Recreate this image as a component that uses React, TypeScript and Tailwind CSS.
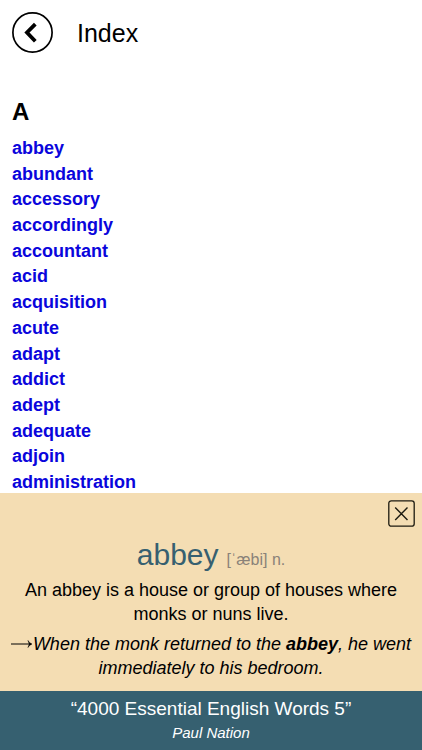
import React from "react";

const words = [
  "abbey",
  "abundant",
  "accessory",
  "accordingly",
  "accountant",
  "acid",
  "acquisition",
  "acute",
  "adapt",
  "addict",
  "adept",
  "adequate",
  "adjoin",
  "administration",
];

export default function App() {
  return (
    <div className="flex min-h-screen flex-col bg-white font-['Liberation_Sans',Arial,sans-serif] text-black">
      {/* Header */}
      <header className="flex items-center gap-6 px-3 pt-3">
        <button type="button" aria-label="Back" className="size-[41px] shrink-0">
          <svg viewBox="0 0 41 41" fill="none" stroke="currentColor" className="size-full">
            <circle cx="20.5" cy="20.5" r="19.6" strokeWidth="1.7" />
            <path d="M23.3 12.2 L15 20.5 L23.3 29.2" strokeWidth="3.8" />
          </svg>
        </button>
        <h1 className="text-[25px] leading-8">Index</h1>
      </header>

      {/* Word list */}
      <main className="flex grow flex-col px-3 pt-[45px]">
        <h2 className="text-2xl leading-7 font-bold">A</h2>
        <ul className="mt-[11px] flex grow flex-col justify-between">
          {words.map((word) => (
            <li key={word} className="text-lg leading-[22px] font-bold">
              <a href={`#${word}`} className="text-[#0a05dc]">
                {word}
              </a>
            </li>
          ))}
        </ul>
      </main>

      {/* Definition */}
      <section className="bg-[#f4ddb3] px-[7px] pt-[7px] pb-[11px] text-center">
        <div className="flex justify-end">
          <button type="button" aria-label="Close" className="size-[27px]">
            <svg viewBox="0 0 27 27" fill="none" stroke="#1c1a10" className="size-full">
              <rect x="0.8" y="0.8" width="25.4" height="25.4" rx="2.5" strokeWidth="1.3" />
              <path d="M7.2 7.5 L19.5 20 M19.5 7.5 L7.2 20" strokeWidth="1.4" />
            </svg>
          </button>
        </div>
        <div className="mt-2.5 flex items-baseline justify-center gap-2">
          <h3 className="text-3xl leading-9 text-[#366070]">abbey</h3>
          <p className="text-base leading-6 text-[#8a8279]">[ˈæbi] n.</p>
        </div>
        <p className="mt-[5px] text-lg leading-6">
          An abbey is a house or group of houses where monks or nuns live.
        </p>
        <p className="mt-1.5 text-lg leading-6 italic">
          <svg
            viewBox="0 0 22 12"
            fill="none"
            stroke="currentColor"
            strokeWidth="1"
            className="inline h-3 w-[22px] align-baseline"
            aria-hidden="true"
          >
            <path d="M0 6 H20" />
            <path d="M17 2.5 Q18 5 21 6 Q18 7 17 9.5 L18.3 6 Z" fill="currentColor" strokeWidth="0.5" />
          </svg>
          When the monk returned to the <b>abbey</b>, he went immediately to his bedroom.
        </p>
      </section>

      <footer className="bg-[#366070] pt-1 pb-[7px] text-center text-white">
        <p className="text-[19px] leading-7">“4000 Essential English Words 5”</p>
        <p className="text-[15px] leading-5 italic">Paul Nation</p>
      </footer>
    </div>
  );
}
